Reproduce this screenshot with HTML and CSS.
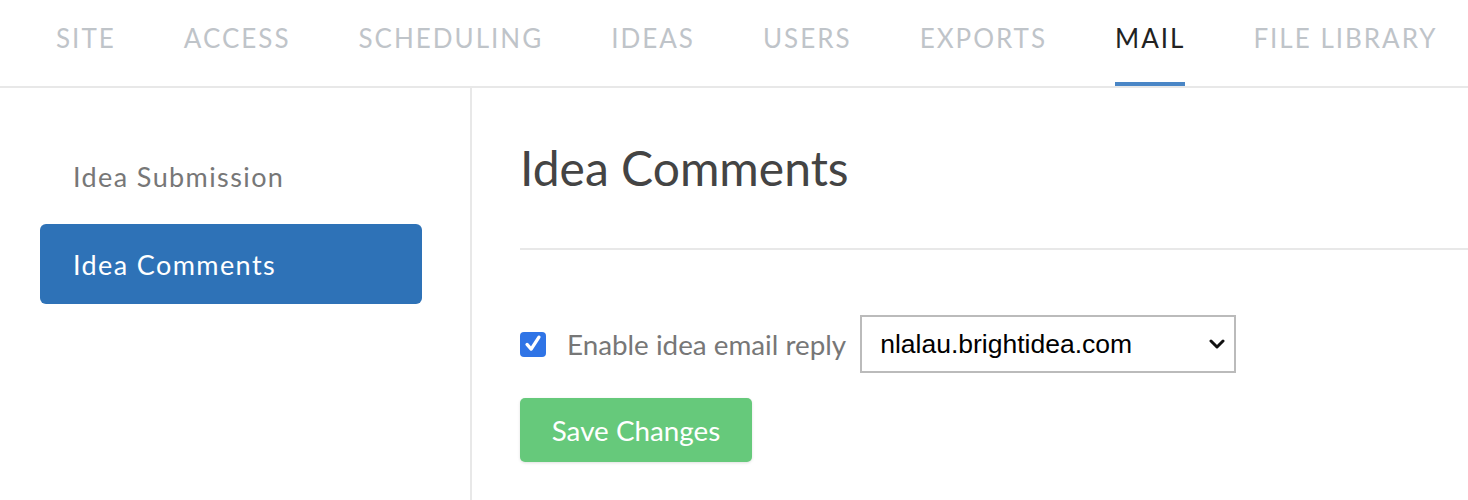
FILE: index.html
```html
<!DOCTYPE html>
<html lang="en">
<head>
<meta charset="utf-8">
<title>Mail - Idea Comments</title>
<link rel="stylesheet" href="styles.css">
</head>
<body>
<nav class="tabs">
  <a class="tab">SITE</a>
  <a class="tab">ACCESS</a>
  <a class="tab">SCHEDULING</a>
  <a class="tab">IDEAS</a>
  <a class="tab">USERS</a>
  <a class="tab">EXPORTS</a>
  <a class="tab active">MAIL</a>
  <a class="tab">FILE LIBRARY</a>
</nav>
<div class="layout">
  <aside class="sidebar">
    <a class="side-item">Idea Submission</a>
    <a class="side-item active">Idea Comments</a>
  </aside>
  <main class="content">
    <h1 class="title">Idea Comments</h1>
    <div class="divider"></div>
    <div class="form-row">
      <span class="checkbox">
        <svg viewBox="0 0 24 24" width="22" height="22"><path d="M5.5 12.5 L10 17.5 L18.5 4.5" fill="none" stroke="#fff" stroke-width="3.6" stroke-linecap="round" stroke-linejoin="round"/></svg>
      </span>
      <span class="label">Enable idea email reply</span>
      <div class="select">
        <span class="select-text">nlalau.brightidea.com</span>
        <svg class="chevron" viewBox="0 0 16 10" width="16" height="10"><path d="M2 2 L8 8 L14 2" fill="none" stroke="#111" stroke-width="3" stroke-linecap="round" stroke-linejoin="round"/></svg>
      </div>
    </div>
    <button class="save">Save Changes</button>
  </main>
</div>
</body>
</html>
```
FILE: styles.css
```css
* { box-sizing: border-box; }
html, body { margin: 0; padding: 0; background: #fff; }
body {
  font-family: Lato, "Open Sans", "Liberation Sans", sans-serif;
  color: #444;
  height: 500px;
  overflow: hidden;
}
.tabs {
  display: flex;
  height: 88px;
  border-bottom: 2px solid #e8e8e8;
  padding-left: 22px;
}
.tab {
  display: flex;
  align-items: center;
  flex-shrink: 0;
  white-space: nowrap;
  margin: 0 34px;
  font-size: 26px;
  letter-spacing: 2px;
  color: #bfc4c9;
  height: 86px;
  border-bottom: 4px solid transparent;
  padding-bottom: 6px;
}
.tab.active {
  color: #222;
  border-bottom-color: #4a86c6;
}
.layout {
  display: flex;
  height: 412px;
}
.sidebar {
  width: 472px;
  border-right: 2px solid #e8e8e8;
  padding: 48px 48px 0 40px;
  display: flex;
  flex-direction: column;
  gap: 8px;
}
.side-item {
  display: flex;
  align-items: center;
  height: 80px;
  padding-left: 33px;
  font-size: 27px;
  letter-spacing: 1.4px;
  color: #777;
  border-radius: 6px;
}
.side-item.active {
  background: #2e72b7;
  color: #fff;
}
.content {
  flex: 1;
  padding: 0 0 0 48px;
}
.title {
  margin: 0;
  padding-top: 50px;
  font-size: 48px;
  font-weight: 400;
  color: #444;
  line-height: 60px;
}
.divider {
  margin-top: 50px;
  height: 2px;
  background: #e8e8e8;
}
.form-row {
  display: flex;
  align-items: center;
  margin-top: 65px;
}
.checkbox {
  width: 26px;
  height: 25px;
  border-radius: 4px;
  background: #2f74e6;
  display: flex;
  align-items: center;
  justify-content: center;
}
.label {
  margin-left: 21px;
  font-size: 27.8px;
  color: #777;
}
.select {
  margin-left: 14px;
  width: 376px;
  height: 58px;
  border: 2px solid #bbb;
  display: flex;
  align-items: center;
  justify-content: space-between;
  padding: 0 9px 0 18px;
}
.select-text {
  font-family: "Liberation Sans", Arial, sans-serif;
  font-size: 26.5px;
  color: #000;
}
.save {
  margin-top: 25px;
  width: 232px;
  height: 64px;
  border: none;
  border-radius: 5px;
  background: #66c97b;
  color: #fff;
  font-family: Lato, "Open Sans", sans-serif;
  font-size: 27.8px;
  box-shadow: 0 1px 3px rgba(0,0,0,0.12);
  padding: 0;
}
```
